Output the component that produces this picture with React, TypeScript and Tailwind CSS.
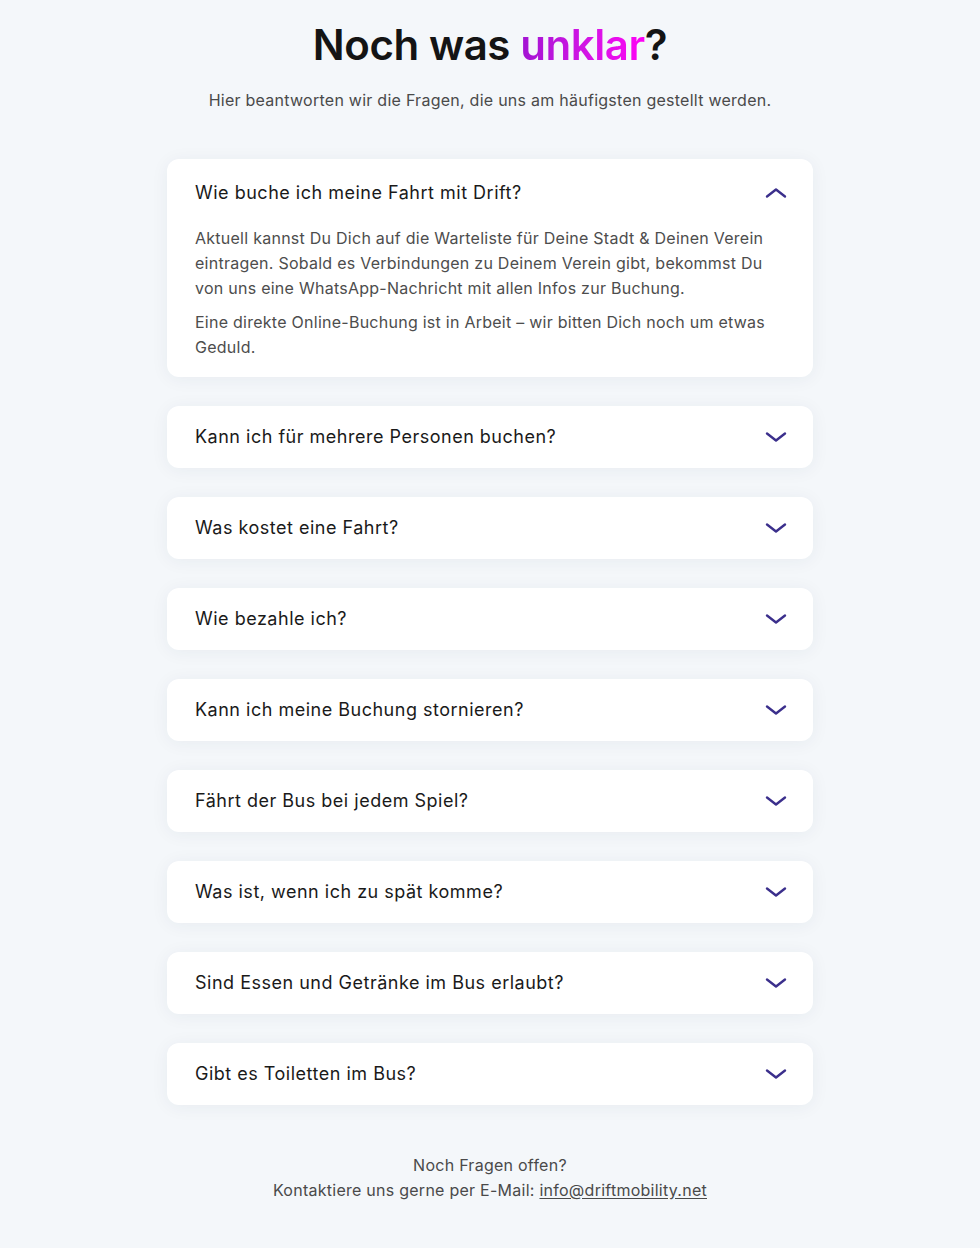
import React, { useState } from 'react';

type Faq = { q: string; a?: string[] };

const FAQS: Faq[] = [
  {
    q: 'Wie buche ich meine Fahrt mit Drift?',
    a: [
      'Aktuell kannst Du Dich auf die Warteliste für Deine Stadt & Deinen Verein eintragen. Sobald es Verbindungen zu Deinem Verein gibt, bekommst Du von uns eine WhatsApp-Nachricht mit allen Infos zur Buchung.',
      'Eine direkte Online-Buchung ist in Arbeit – wir bitten Dich noch um etwas Geduld.',
    ],
  },
  { q: 'Kann ich für mehrere Personen buchen?' },
  { q: 'Was kostet eine Fahrt?' },
  { q: 'Wie bezahle ich?' },
  { q: 'Kann ich meine Buchung stornieren?' },
  { q: 'Fährt der Bus bei jedem Spiel?' },
  { q: 'Was ist, wenn ich zu spät komme?' },
  { q: 'Sind Essen und Getränke im Bus erlaubt?' },
  { q: 'Gibt es Toiletten im Bus?' },
];

const Chevron = ({ open }: { open: boolean }) => (
  <svg
    width="22"
    height="12"
    viewBox="0 0 22 12"
    fill="none"
    stroke="#3b2f8c"
    strokeWidth={2.4}
    strokeLinecap="round"
    strokeLinejoin="round"
    className={open ? 'rotate-180' : ''}
  >
    <path d="M2 2.5l9 7 9-7" />
  </svg>
);

export default function App() {
  const [openIdx, setOpenIdx] = useState<number | null>(0);

  return (
    <div className="min-h-screen bg-[#f4f7fa] font-['Inter',sans-serif]">
      <main className="mx-auto flex w-[646px] flex-col items-center pt-5 pb-[45px]">
        <h1 className="text-[42px] font-semibold leading-[50px] tracking-[-0.01em] text-[#141414]">
          Noch was{' '}
          <span className="bg-gradient-to-r from-[#a214d2] to-[#ff00f5] bg-clip-text text-transparent">
            unklar
          </span>
          ?
        </h1>
        <p className="mt-[18px] text-base leading-6 tracking-[0.016em] text-[#4a4a4a]">
          Hier beantworten wir die Fragen, die uns am häufigsten gestellt werden.
        </p>

        <div className="mt-[47px] flex w-full flex-col gap-[29px]">
          {FAQS.map((f, i) => {
            const open = openIdx === i;
            return (
              <div
                key={f.q}
                className="rounded-xl bg-white shadow-[0_2px_18px_rgba(30,50,80,0.06)]"
              >
                <button
                  onClick={() => setOpenIdx(open ? null : i)}
                  className={`flex w-full items-center justify-between pl-7 pr-[26px] text-left ${
                    open ? 'pt-[22px] pb-[19px]' : 'py-[19px]'
                  }`}
                >
                  <span className="text-lg leading-6 tracking-[0.028em] text-[#1a1a1a]">{f.q}</span>
                  <Chevron open={open} />
                </button>
                {open && f.a && (
                  <div className="flex flex-col gap-[9px] px-7 pt-[2px] pb-[17px] text-base leading-[25px] tracking-[0.016em] text-[#4d4d4d]">
                    {f.a.map((p) => (
                      <p key={p}>{p}</p>
                    ))}
                  </div>
                )}
              </div>
            );
          })}
        </div>

        <div className="mt-12 text-center text-base leading-[25px] tracking-[0.016em] text-[#4a4a4a]">
          <p>Noch Fragen offen?</p>
          <p>
            Kontaktiere uns gerne per E-Mail:{' '}
            <a href="mailto:info@driftmobility.net" className="underline underline-offset-2">
              info@driftmobility.net
            </a>
          </p>
        </div>
      </main>
    </div>
  );
}
